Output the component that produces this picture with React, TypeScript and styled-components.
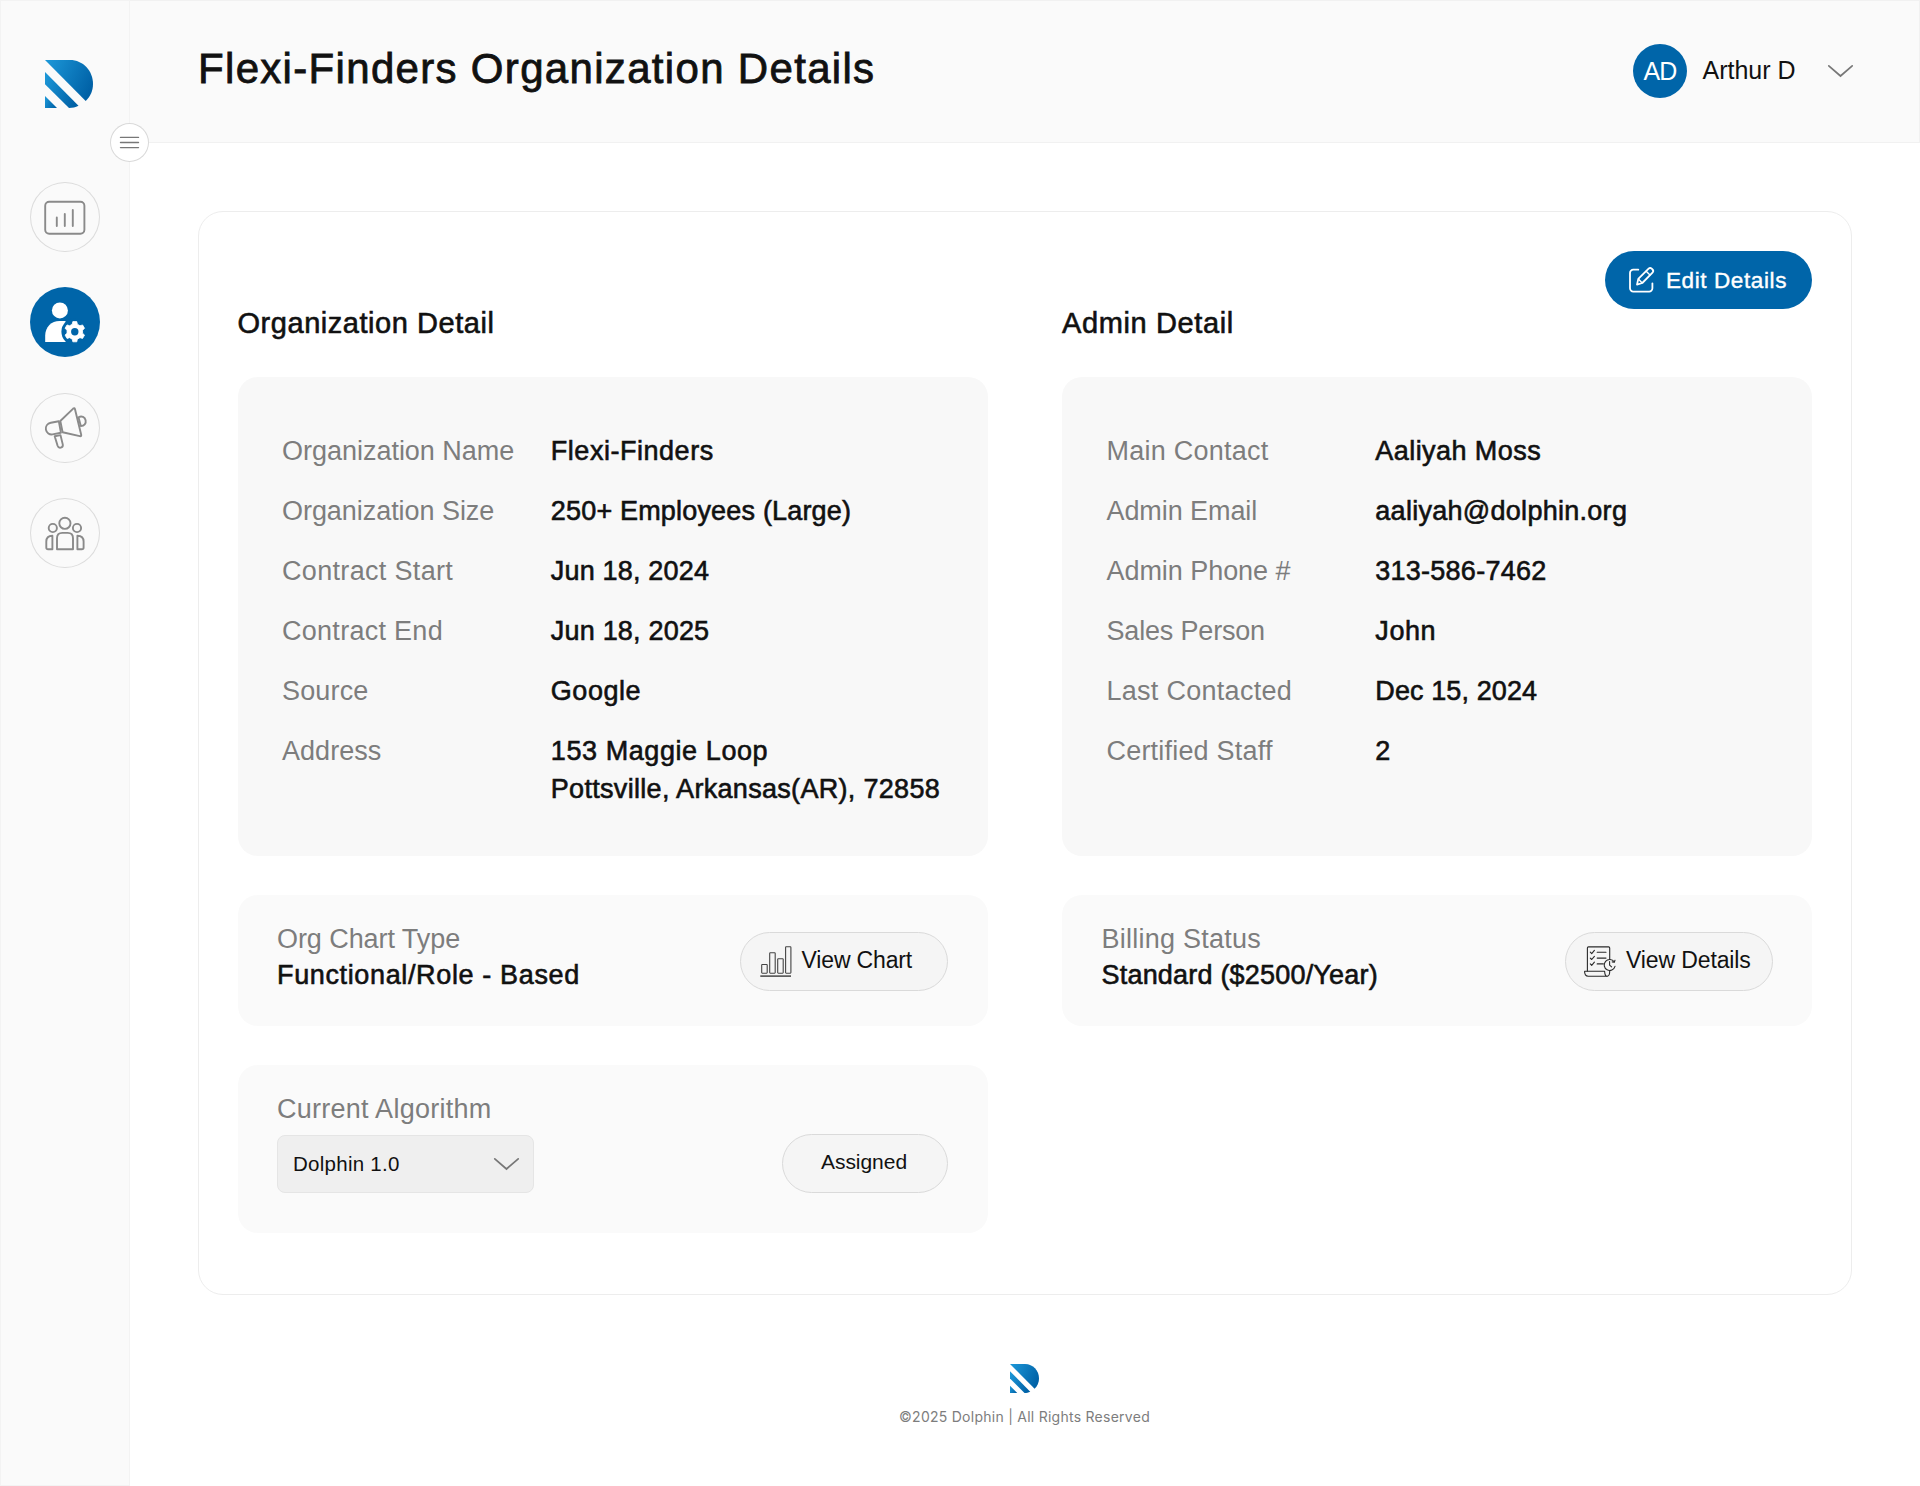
import React from 'react';
import styled, { createGlobalStyle } from 'styled-components';

const color = {
  ink: '#111111',
  muted: '#7d7d7d',
  blue: '#0065a9',
  chrome: '#fafafa',
  line: '#ededed',
};

const GlobalStyle = createGlobalStyle`
  * { box-sizing: border-box; }
  body {
    margin: 0;
    background: #fff;
    color: ${color.ink};
    font-family: 'Liberation Sans', Arial, sans-serif;
  }
  button { font-family: inherit; color: inherit; cursor: pointer; }
  h1, h2, dl, dt, dd, p { margin: 0; font-weight: 400; }
  svg { display: block; flex: none; overflow: visible; }
`;

/* ---------- Shell ---------- */

const Shell = styled.div`
  display: grid;
  grid-template-columns: 130px 1fr;
  height: 1486px;
`;

const Sidebar = styled.aside`
  position: relative;
  display: flex;
  flex-direction: column;
  align-items: center;
  padding-top: 59px;
  background: ${color.chrome};
  border: 1px solid #f3f3f3;
`;

const Brand = styled.div`
  padding-left: 8px;
`;

const Nav = styled.nav`
  display: flex;
  flex-direction: column;
  gap: 35.2px;
  margin-top: 74.3px;
`;

const NavButton = styled.button<{ $active?: boolean }>`
  width: 70px;
  height: 70px;
  padding: 0;
  border: 0;
  border-radius: 50%;
  background: ${(p) => (p.$active ? color.blue : 'transparent')};
  box-shadow: ${(p) => (p.$active ? 'none' : 'inset 0 0 0 1px #dcdcdc')};
`;

const SidebarToggle = styled.button`
  position: absolute;
  top: 122px;
  right: -20px;
  width: 39px;
  height: 39px;
  padding: 0;
  border: 0;
  border-radius: 50%;
  background: #fff;
  box-shadow: inset 0 0 0 1px #d9d9d9;
`;

const Main = styled.div`
  display: flex;
  flex-direction: column;
  min-width: 0;
`;

const Header = styled.header`
  display: flex;
  align-items: flex-start;
  justify-content: space-between;
  height: 143px;
  padding: 43px 66px 0 68px;
  background: ${color.chrome};
  border: 1px solid #f1f1f1;
  border-left: 0;
`;

const Title = styled.h1`
  padding-top: 1px;
  font-size: 42px;
  line-height: 47px;
  letter-spacing: 1.32px;
  white-space: nowrap;
  -webkit-text-stroke: 0.8px currentColor;
`;

const User = styled.div`
  display: flex;
  align-items: center;
  width: 220px;
  height: 54px;
`;

const Avatar = styled.span`
  width: 54px;
  height: 54px;
  border-radius: 50%;
  background: ${color.blue};
  color: #fff;
  font-size: 25px;
  line-height: 54px;
  letter-spacing: -0.9px;
  text-align: center;
`;

const UserName = styled.span`
  margin: 0 auto 0 15.5px;
  padding-bottom: 2px;
  font-size: 25px;
  line-height: 28px;
`;

/* ---------- Card ---------- */

const Card = styled.section`
  width: 1654px;
  height: 1083.5px;
  margin: 68px 0 0 68px;
  padding: 39px 39px 0 38.5px;
  border: 1px solid ${color.line};
  border-radius: 25px;
`;

const Toolbar = styled.div`
  display: flex;
  justify-content: flex-end;
  height: 56px;
`;

const EditButton = styled.button`
  display: flex;
  align-items: center;
  gap: 11px;
  width: 207px;
  height: 58px;
  padding: 0 0 0 24px;
  border: 0;
  border-radius: 29px;
  background: ${color.blue};
  color: #fff;
  font-size: 22.5px;
  line-height: 25px;
  letter-spacing: 0.6px;
  -webkit-text-stroke: 0.4px currentColor;
`;

const Columns = styled.div`
  display: grid;
  grid-template-columns: 750px 750px;
  column-gap: 74.5px;
`;

const Column = styled.div`
  display: flex;
  flex-direction: column;
  gap: 39.5px;
`;

const Heading = styled.h2<{ $track: number }>`
  margin-bottom: -1.5px;
  font-size: 29px;
  line-height: 32px;
  letter-spacing: ${(p) => p.$track}px;
  -webkit-text-stroke: 0.6px currentColor;
`;

const FactPanel = styled.dl`
  display: flex;
  flex-direction: column;
  gap: 22px;
  height: 478.5px;
  padding: 55px 0 0 44.5px;
  border-radius: 20px;
  background: #f8f8f8;
`;

const FactRow = styled.div`
  display: grid;
  grid-template-columns: 268.8px 1fr;
  font-size: 27px;
  line-height: 38px;
  white-space: nowrap;
`;

const Label = styled.dt<{ $track: number }>`
  color: ${color.muted};
  letter-spacing: ${(p) => p.$track}px;
`;

const ValueList = styled.dd`
  display: flex;
  flex-direction: column;
`;

const Value = styled.span<{ $track: number }>`
  letter-spacing: ${(p) => p.$track}px;
  -webkit-text-stroke: 0.6px currentColor;
`;

const ActionPanel = styled.div<{ $height: number }>`
  display: flex;
  align-items: flex-start;
  justify-content: space-between;
  height: ${(p) => p.$height}px;
  padding: 26px 39.5px 0;
  border-radius: 20px;
  background: ${color.chrome};
`;

const Stack = styled.div`
  display: flex;
  flex-direction: column;
  font-size: 27px;
  line-height: 36px;
  white-space: nowrap;
`;

const Caption = styled.span<{ $track: number }>`
  color: ${color.muted};
  letter-spacing: ${(p) => p.$track}px;
`;

const PillButton = styled.button<{ $offset: number; $width?: number }>`
  display: flex;
  align-items: center;
  justify-content: ${(p) => (p.$width ? 'center' : 'flex-start')};
  gap: 10px;
  width: ${(p) => p.$width ?? 208}px;
  height: 59px;
  margin-top: ${(p) => p.$offset}px;
  padding: ${(p) => (p.$width ? '0 2px 0 0' : '0 0 0 18.5px')};
  border: 1px solid #dadada;
  border-radius: 30px;
  background: #f5f5f5;
`;

const PillText = styled.span<{ $size: number; $track: number }>`
  padding-bottom: 3px;
  font-size: ${(p) => p.$size}px;
  letter-spacing: ${(p) => p.$track}px;
  white-space: nowrap;
`;

const Select = styled.button`
  display: flex;
  align-items: center;
  justify-content: space-between;
  width: 256.5px;
  height: 58px;
  margin-top: 8px;
  padding: 0 13.5px 0 15px;
  border: 1px solid #e5e5e5;
  border-radius: 8px;
  background: #efefef;
  font-size: 20.5px;
  letter-spacing: 0.27px;
`;

const Footer = styled.footer`
  display: flex;
  flex-direction: column;
  align-items: center;
  gap: 15px;
  margin-top: 69.5px;
  padding-right: 1px;
  color: ${color.muted};
  font-family: Inter, sans-serif;
  font-size: 14px;
  line-height: 17px;
  letter-spacing: 0.26px;
`;

/* ---------- Icons ---------- */

const Logo = ({ size, id }: { size: number; id: string }) => (
  <svg width={size} height={size} viewBox="0 0 48 48">
    <defs>
      <linearGradient id={id} x1="0" y1="0.2" x2="1" y2="0.6">
        <stop offset="0" stopColor="#1b95d6" />
        <stop offset="1" stopColor="#0061a6" />
      </linearGradient>
    </defs>
    <g fill={`url(#${id})`}>
      <path d="M0 0H25C38 0 48 10.7 48 24C48 30.8 45.2 36.8 40.7 41Z" />
      <path d="M0 12V24.2L24 48C27.5 48 30.5 47.3 33.5 45.8Z" />
      <path d="M0 36V48H12Z" />
    </g>
  </svg>
);

const Chevron = () => (
  <svg width="25" height="13" viewBox="0 0 25 13" fill="none" stroke="#777" strokeWidth="1.7">
    <path d="M0.8 0.8L12.5 11L24.2 0.8" strokeLinecap="round" />
  </svg>
);

const MenuIcon = () => (
  <svg width="39" height="39" viewBox="0 0 39 39" stroke="#777" strokeWidth="1.4" strokeLinecap="round">
    <path d="M10.5 14.4H28.5M10.5 19.5H28.5M10.5 24.6H28.5" />
  </svg>
);

const NavGlyph = ({ children }: { children: React.ReactNode }) => (
  <svg
    width="70"
    height="70"
    viewBox="0 0 70 70"
    fill="none"
    stroke="#8a8a8a"
    strokeWidth="1.9"
    strokeLinecap="round"
    strokeLinejoin="round"
  >
    {children}
  </svg>
);

const DashboardIcon = () => (
  <NavGlyph>
    <rect x="15.2" y="19.8" width="39.2" height="31.9" rx="4" />
    <path d="M26.8 35.5V44M34.8 32V44M42.8 28V44" />
  </NavGlyph>
);

const GEAR = (() => {
  const point = (r: number, deg: number) => {
    const a = (deg * Math.PI) / 180;
    return `${(44.8 + r * Math.cos(a)).toFixed(2)} ${(44.7 + r * Math.sin(a)).toFixed(2)}`;
  };
  const pts: string[] = [];
  for (let i = 0; i < 6; i++) {
    const c = i * 60 - 90;
    pts.push(point(7.9, c - 19), point(10.3, c - 11), point(10.3, c + 11), point(7.9, c + 19));
  }
  return `M${pts.join('L')}Z`;
})();

const UserGearIcon = () => (
  <svg width="70" height="70" viewBox="0 0 70 70" fill="#fff">
    <circle cx="29.9" cy="23.4" r="8" />
    <path d="M15.2 55V48.5C15.2 40 21.5 34 29.5 34H35.5L37 55Z" />
    <circle cx="44.8" cy="44.7" r="13.4" fill={color.blue} />
    <path d={GEAR} stroke="#fff" strokeWidth="0.8" strokeLinejoin="round" />
    <circle cx="44.8" cy="44.7" r="3.7" fill={color.blue} />
  </svg>
);

const MegaphoneIcon = () => (
  <NavGlyph>
    <path d="M43.2 15.6Q44.5 14.5 45 16.2L51.2 41.8Q51.5 43.5 49.8 43.1L32.6 39.2L30.3 28Z" />
    <path d="M28.8 28.2L20.8 29.8C17.4 30.5 15.3 33.4 15.9 36.7C16.5 40 19.5 42 22.6 41.4L30.9 39.7Z" />
    <path d="M24.7 43.2L30.5 42.1L32.8 51.6C33.3 54.9 28.7 56 27.6 52.7Z" />
    <path d="M48.5 24.3C51.8 22.4 54.9 24.2 55.6 27.3C56.3 30.4 54.2 33.1 50.8 33Z" />
  </NavGlyph>
);

const PeopleIcon = () => (
  <NavGlyph>
    <circle cx="34.9" cy="25.3" r="5.6" />
    <circle cx="22.8" cy="30" r="4.1" />
    <circle cx="47" cy="30" r="4.1" />
    <path d="M27 51.2V40.2Q27 34.9 32.3 34.9H37.7Q43 34.9 43 40.2V51.2Z" />
    <path d="M22.4 37.8C18.4 37.9 16.3 40 16.3 43.6V49.4Q16.3 51.2 18.1 51.2H22.4Z" />
    <path d="M47.4 37.8C51.4 37.9 53.6 40 53.6 43.6V49.4Q53.6 51.2 51.8 51.2H47.4Z" />
  </NavGlyph>
);

const EditIcon = () => (
  <svg
    width="26"
    height="26"
    viewBox="0 0 26 26"
    fill="none"
    stroke="#fff"
    strokeWidth="1.8"
    strokeLinecap="round"
    strokeLinejoin="round"
  >
    <path d="M9.3 2.7H4.3A3.3 3.3 0 0 0 1 6V21.3A3.3 3.3 0 0 0 4.3 24.6H20.1A3.3 3.3 0 0 0 23.4 21.3V16.3" />
    <path d="M8 17.6L9.3 11.9L19.6 1.7A2.2 2.2 0 0 1 22.7 1.7L23.5 2.5A2.2 2.2 0 0 1 23.5 5.6L13.3 16Z" />
    <path d="M17.2 4.2L21 8M9.6 12.2L13 15.7" strokeWidth="1.4" />
  </svg>
);

const ChartIcon = () => (
  <svg width="32" height="32" viewBox="0 0 32 32" fill="none" stroke="#444" strokeWidth="1.1">
    <rect x="1.7" y="18.5" width="5.5" height="8.7" rx="0.6" />
    <rect x="9.7" y="6.8" width="5.5" height="20.4" rx="0.6" />
    <rect x="17.7" y="12.7" width="5.5" height="14.5" rx="0.6" />
    <rect x="25.6" y="0.8" width="5.3" height="26.4" rx="0.6" />
    <path d="M0.3 30.1H31" strokeWidth="1.5" />
  </svg>
);

const BillingIcon = () => (
  <svg
    width="32"
    height="32"
    viewBox="0 0 32 32"
    fill="none"
    stroke="#2a2a2a"
    strokeWidth="1.1"
    strokeLinecap="round"
    strokeLinejoin="round"
  >
    <path d="M3.4 25V2Q3.4 0.9 4.5 0.9H24.6Q25.7 0.9 25.7 2V13" />
    <path d="M0.6 25.2H20.6C20.8 28.4 21.3 30.2 23 30.2H4.2C1.8 30.2 0.4 28.2 0.6 25.2Z" />
    <path d="M23 30.2C25 30.2 25.8 28.4 25.7 25" />
    <path d="M30.2 15.8A5.5 5.5 0 1 0 31 20.4" />
    <path d="M31 14.2L30.4 16.2L28.2 15.9" />
    <path d="M25.6 15.6V19.2L27.6 20.9" />
    <path d="M6.3 6.2L7.7 7.6L10.4 4.4M6.3 12.1L7.7 13.5L10.4 10.3M6.3 17.9L7.7 19.3L10.4 16.1" />
    <path d="M13.2 6.2H22M13.2 12.1H22M13.2 17.9H19.4" />
  </svg>
);

/* ---------- Content ---------- */

type Text = [text: string, track: number];
type Fact = { label: Text; values: Text[] };

const organization: Fact[] = [
  { label: ['Organization Name', -0.02], values: [['Flexi-Finders', 0.53]] },
  { label: ['Organization Size', -0.05], values: [['250+ Employees (Large)', 0.18]] },
  { label: ['Contract Start', 0.33], values: [['Jun 18, 2024', 0.18]] },
  { label: ['Contract End', 0.28], values: [['Jun 18, 2025', 0.2]] },
  { label: ['Source', 0.15], values: [['Google', 0.55]] },
  {
    label: ['Address', 0.03],
    values: [
      ['153 Maggie Loop', 0.58],
      ['Pottsville, Arkansas(AR), 72858', 0.31],
    ],
  },
];

const admin: Fact[] = [
  { label: ['Main Contact', 0.24], values: [['Aaliyah Moss', 0.44]] },
  { label: ['Admin Email', -0.08], values: [['aaliyah@dolphin.org', 0.28]] },
  { label: ['Admin Phone #', -0.05], values: [['313-586-7462', 0.25]] },
  { label: ['Sales Person', -0.18], values: [['John', 0.59]] },
  { label: ['Last Contacted', 0.28], values: [['Dec 15, 2024', 0.1]] },
  { label: ['Certified Staff', 0.2], values: [['2', 0]] },
];

const Facts = ({ items }: { items: Fact[] }) => (
  <FactPanel>
    {items.map(({ label, values }) => (
      <FactRow key={label[0]}>
        <Label $track={label[1]}>{label[0]}</Label>
        <ValueList>
          {values.map(([text, track]) => (
            <Value key={text} $track={track}>
              {text}
            </Value>
          ))}
        </ValueList>
      </FactRow>
    ))}
  </FactPanel>
);

export default function App() {
  return (
    <Shell>
      <GlobalStyle />
      <Sidebar>
        <Brand>
          <Logo size={48} id="logo-side" />
        </Brand>
        <Nav>
          <NavButton aria-label="Dashboard">
            <DashboardIcon />
          </NavButton>
          <NavButton $active aria-label="Organizations">
            <UserGearIcon />
          </NavButton>
          <NavButton aria-label="Announcements">
            <MegaphoneIcon />
          </NavButton>
          <NavButton aria-label="Teams">
            <PeopleIcon />
          </NavButton>
        </Nav>
        <SidebarToggle aria-label="Toggle menu">
          <MenuIcon />
        </SidebarToggle>
      </Sidebar>

      <Main>
        <Header>
          <Title>Flexi-Finders Organization Details</Title>
          <User>
            <Avatar>AD</Avatar>
            <UserName>Arthur D</UserName>
            <Chevron />
          </User>
        </Header>

        <Card>
          <Toolbar>
            <EditButton>
              <EditIcon />
              Edit Details
            </EditButton>
          </Toolbar>
          <Columns>
            <Column>
              <Heading $track={0.54}>Organization Detail</Heading>
              <Facts items={organization} />
              <ActionPanel $height={130.5}>
                <Stack>
                  <Caption $track={-0.07}>Org Chart Type</Caption>
                  <Value $track={0.64}>Functional/Role - Based</Value>
                </Stack>
                <PillButton $offset={11}>
                  <ChartIcon />
                  <PillText $size={23} $track={-0.15}>
                    View Chart
                  </PillText>
                </PillButton>
              </ActionPanel>
              <ActionPanel $height={167.5}>
                <Stack>
                  <Caption $track={0.26}>Current Algorithm</Caption>
                  <Select>
                    Dolphin 1.0
                    <Chevron />
                  </Select>
                </Stack>
                <PillButton $offset={43} $width={166}>
                  <PillText $size={21} $track={-0.04}>
                    Assigned
                  </PillText>
                </PillButton>
              </ActionPanel>
            </Column>
            <Column>
              <Heading $track={0.62}>Admin Detail</Heading>
              <Facts items={admin} />
              <ActionPanel $height={130.5}>
                <Stack>
                  <Caption $track={0.25}>Billing Status</Caption>
                  <Value $track={0.2}>Standard ($2500/Year)</Value>
                </Stack>
                <PillButton $offset={11}>
                  <BillingIcon />
                  <PillText $size={23} $track={-0.12}>
                    View Details
                  </PillText>
                </PillButton>
              </ActionPanel>
            </Column>
          </Columns>
        </Card>

        <Footer>
          <Logo size={29} id="logo-foot" />
          <p>©2025 Dolphin | All Rights Reserved</p>
        </Footer>
      </Main>
    </Shell>
  );
}
